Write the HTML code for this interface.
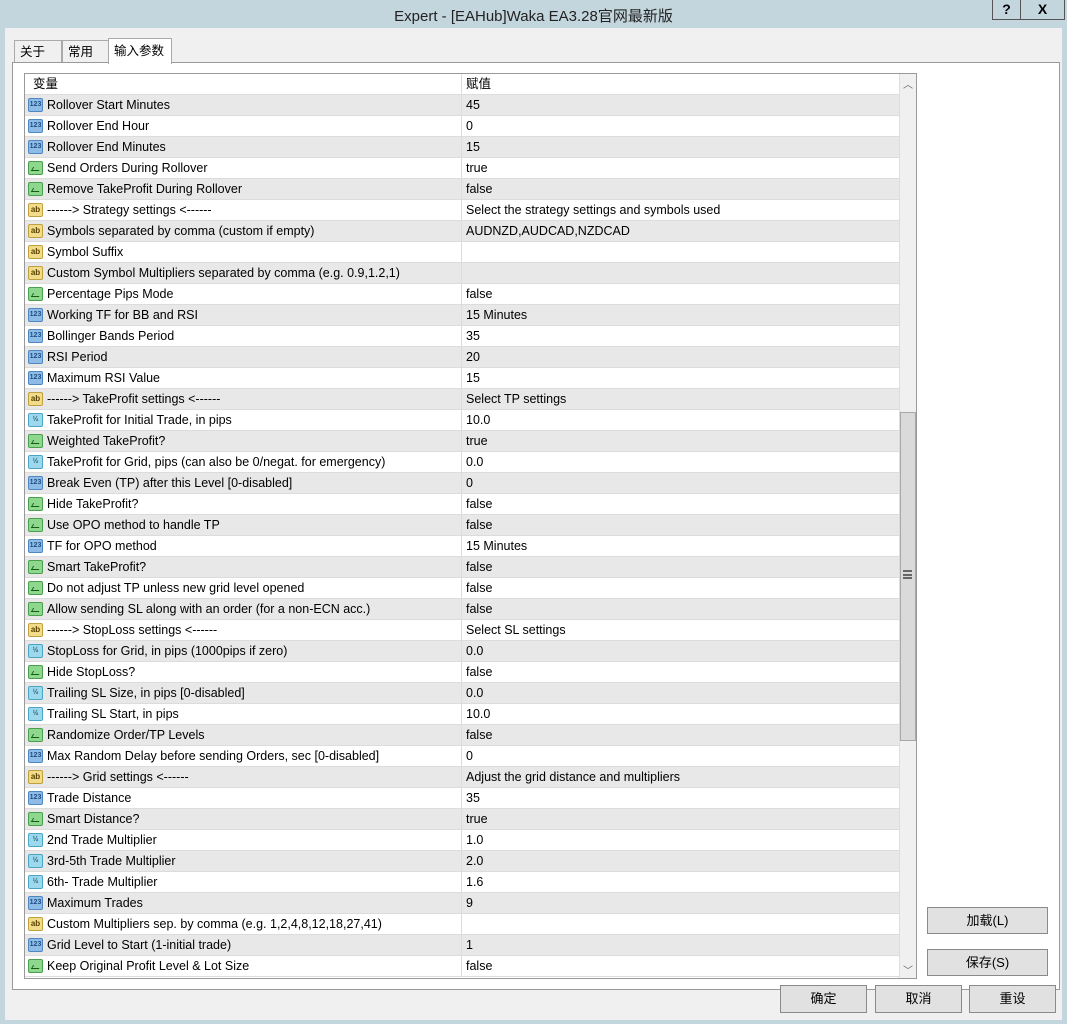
<!DOCTYPE html><html><head><meta charset="utf-8"><style>
*{box-sizing:border-box;margin:0;padding:0}
body{width:1067px;height:1024px;background:#c4d6dd;font-family:"Liberation Sans","Noto Sans CJK SC",sans-serif;font-size:12.5px;color:#000;position:relative;overflow:hidden}
.abs{position:absolute}
.title{left:0;width:1067px;text-align:center;top:5px;font-size:15px;color:#222}
.tb{top:0;height:20px;border:1px solid #555;border-top:none;background:#c4d6dd;font-weight:bold;text-align:center;line-height:18px;font-size:14px}
.body{left:5px;top:28px;width:1057px;height:992px;background:#f0f0f0}
.tab{height:24px;border:1px solid #aaa;border-bottom:none;background:#f0f0f0;padding:1px 5px;font-size:12.5px;line-height:20px}
.panel{left:12px;top:62px;width:1048px;height:928px;border:1px solid #999;background:#fff}
.list{left:24px;top:73px;width:893px;height:906px;border:1px solid #999;background:#fff;overflow:hidden}
.row{position:absolute;left:0;width:874px;height:21px;border-bottom:1px solid #dcdcdc;line-height:20px}
.row.g{background:#e8e8e8}
.row .n{position:absolute;left:22px;white-space:nowrap}
.row .v{position:absolute;left:436px;padding-left:4px;border-left:1px solid #dcdcdc;height:21px;white-space:nowrap}
.ic{position:absolute;left:3px;top:3px;width:15px;height:14px;border-radius:2px;font-size:7px;line-height:12px;text-align:center;font-weight:bold}
.i1{background:#8fbce6;border:1px solid #4f87c0;color:#1d4f86}
.ia{background:#f1dc8a;border:1px solid #c2a040;color:#5a4000;font-size:8px}
.ig{background:#8ed78e;border:1px solid #4aa04a}
.ig:after{content:"";position:absolute;left:3px;top:5px;width:7px;height:3px;border-bottom:1px solid #135c13;border-left:1px solid #135c13;transform:skewX(-30deg)}
.iv{background:#9ed8ec;border:1px solid #4aa6c6;color:#1a5f7a}
.btn{background:#e1e1e1;border:1px solid #8a8a8a;text-align:center;font-size:13px}
</style></head><body>
<div class="abs title">Expert - [EAHub]Waka EA3.28官网最新版</div>
<div class="abs tb" style="left:992px;width:29px">?</div>
<div class="abs tb" style="left:1020px;width:45px">X</div>
<div class="abs body"></div>
<div class="abs tab" style="left:14px;top:40px;width:48px">关于</div>
<div class="abs tab" style="left:62px;top:40px;width:47px">常用</div>
<div class="abs panel"></div>
<div class="abs tab" style="left:108px;top:38px;width:64px;height:26px;background:#fff;z-index:2;padding-top:2px">输入参数</div>
<div class="abs list">
<div class="row" style="top:0;height:21px;border-bottom:1px solid #ddd"><span class="n" style="left:8px">变量</span><span class="v" style="border-color:#ddd">赋值</span></div>
<div class="row g" style="top:21px"><span class="ic i1">123</span><span class="n">Rollover Start Minutes</span><span class="v">45</span></div>
<div class="row" style="top:42px"><span class="ic i1">123</span><span class="n">Rollover End Hour</span><span class="v">0</span></div>
<div class="row g" style="top:63px"><span class="ic i1">123</span><span class="n">Rollover End Minutes</span><span class="v">15</span></div>
<div class="row" style="top:84px"><span class="ic ig"></span><span class="n">Send Orders During Rollover</span><span class="v">true</span></div>
<div class="row g" style="top:105px"><span class="ic ig"></span><span class="n">Remove TakeProfit During Rollover</span><span class="v">false</span></div>
<div class="row" style="top:126px"><span class="ic ia">ab</span><span class="n">------&gt; Strategy settings &lt;------</span><span class="v">Select the strategy settings and symbols used</span></div>
<div class="row g" style="top:147px"><span class="ic ia">ab</span><span class="n">Symbols separated by comma (custom if empty)</span><span class="v">AUDNZD,AUDCAD,NZDCAD</span></div>
<div class="row" style="top:168px"><span class="ic ia">ab</span><span class="n">Symbol Suffix</span><span class="v"></span></div>
<div class="row g" style="top:189px"><span class="ic ia">ab</span><span class="n">Custom Symbol Multipliers separated by comma (e.g. 0.9,1.2,1)</span><span class="v"></span></div>
<div class="row" style="top:210px"><span class="ic ig"></span><span class="n">Percentage Pips Mode</span><span class="v">false</span></div>
<div class="row g" style="top:231px"><span class="ic i1">123</span><span class="n">Working TF for BB and RSI</span><span class="v">15 Minutes</span></div>
<div class="row" style="top:252px"><span class="ic i1">123</span><span class="n">Bollinger Bands Period</span><span class="v">35</span></div>
<div class="row g" style="top:273px"><span class="ic i1">123</span><span class="n">RSI Period</span><span class="v">20</span></div>
<div class="row" style="top:294px"><span class="ic i1">123</span><span class="n">Maximum RSI Value</span><span class="v">15</span></div>
<div class="row g" style="top:315px"><span class="ic ia">ab</span><span class="n">------&gt; TakeProfit settings &lt;------</span><span class="v">Select TP settings</span></div>
<div class="row" style="top:336px"><span class="ic iv">½</span><span class="n">TakeProfit for Initial Trade, in pips</span><span class="v">10.0</span></div>
<div class="row g" style="top:357px"><span class="ic ig"></span><span class="n">Weighted TakeProfit?</span><span class="v">true</span></div>
<div class="row" style="top:378px"><span class="ic iv">½</span><span class="n">TakeProfit for Grid, pips (can also be 0/negat. for emergency)</span><span class="v">0.0</span></div>
<div class="row g" style="top:399px"><span class="ic i1">123</span><span class="n">Break Even (TP) after this Level [0-disabled]</span><span class="v">0</span></div>
<div class="row" style="top:420px"><span class="ic ig"></span><span class="n">Hide TakeProfit?</span><span class="v">false</span></div>
<div class="row g" style="top:441px"><span class="ic ig"></span><span class="n">Use OPO method to handle TP</span><span class="v">false</span></div>
<div class="row" style="top:462px"><span class="ic i1">123</span><span class="n">TF for OPO method</span><span class="v">15 Minutes</span></div>
<div class="row g" style="top:483px"><span class="ic ig"></span><span class="n">Smart TakeProfit?</span><span class="v">false</span></div>
<div class="row" style="top:504px"><span class="ic ig"></span><span class="n">Do not adjust TP unless new grid level opened</span><span class="v">false</span></div>
<div class="row g" style="top:525px"><span class="ic ig"></span><span class="n">Allow sending SL along with an order (for a non-ECN acc.)</span><span class="v">false</span></div>
<div class="row" style="top:546px"><span class="ic ia">ab</span><span class="n">------&gt; StopLoss settings &lt;------</span><span class="v">Select SL settings</span></div>
<div class="row g" style="top:567px"><span class="ic iv">½</span><span class="n">StopLoss for Grid, in pips (1000pips if zero)</span><span class="v">0.0</span></div>
<div class="row" style="top:588px"><span class="ic ig"></span><span class="n">Hide StopLoss?</span><span class="v">false</span></div>
<div class="row g" style="top:609px"><span class="ic iv">½</span><span class="n">Trailing SL Size, in pips [0-disabled]</span><span class="v">0.0</span></div>
<div class="row" style="top:630px"><span class="ic iv">½</span><span class="n">Trailing SL Start, in pips</span><span class="v">10.0</span></div>
<div class="row g" style="top:651px"><span class="ic ig"></span><span class="n">Randomize Order/TP Levels</span><span class="v">false</span></div>
<div class="row" style="top:672px"><span class="ic i1">123</span><span class="n">Max Random Delay before sending Orders, sec [0-disabled]</span><span class="v">0</span></div>
<div class="row g" style="top:693px"><span class="ic ia">ab</span><span class="n">------&gt; Grid settings &lt;------</span><span class="v">Adjust the grid distance and multipliers</span></div>
<div class="row" style="top:714px"><span class="ic i1">123</span><span class="n">Trade Distance</span><span class="v">35</span></div>
<div class="row g" style="top:735px"><span class="ic ig"></span><span class="n">Smart Distance?</span><span class="v">true</span></div>
<div class="row" style="top:756px"><span class="ic iv">½</span><span class="n">2nd Trade Multiplier</span><span class="v">1.0</span></div>
<div class="row g" style="top:777px"><span class="ic iv">½</span><span class="n">3rd-5th Trade Multiplier</span><span class="v">2.0</span></div>
<div class="row" style="top:798px"><span class="ic iv">½</span><span class="n">6th- Trade Multiplier</span><span class="v">1.6</span></div>
<div class="row g" style="top:819px"><span class="ic i1">123</span><span class="n">Maximum Trades</span><span class="v">9</span></div>
<div class="row" style="top:840px"><span class="ic ia">ab</span><span class="n">Custom Multipliers sep. by comma (e.g. 1,2,4,8,12,18,27,41)</span><span class="v"></span></div>
<div class="row g" style="top:861px"><span class="ic i1">123</span><span class="n">Grid Level to Start (1-initial trade)</span><span class="v">1</span></div>
<div class="row" style="top:882px"><span class="ic ig"></span><span class="n">Keep Original Profit Level &amp; Lot Size</span><span class="v">false</span></div>
<div class="abs" style="left:874px;top:0;width:18px;height:904px;background:#f0f0f0;border-left:1px solid #ddd"></div>
<div class="abs" style="left:878px;top:2px;font-size:10px;color:#666">︿</div>
<div class="abs" style="left:878px;top:888px;font-size:10px;color:#666">﹀</div>
<div class="abs" style="left:875px;top:338px;width:16px;height:329px;background:#dadada;border:1px solid #a8a8a8"></div>
<div class="abs" style="left:878px;top:496px;width:9px;height:9px;border-top:2px solid #666;border-bottom:2px solid #666"><div style="margin-top:1.5px;height:2px;background:#666"></div></div>
</div>
<div class="abs btn" style="left:927px;top:907px;width:121px;height:27px;line-height:25px">加载(L)</div>
<div class="abs btn" style="left:927px;top:949px;width:121px;height:27px;line-height:25px">保存(S)</div>
<div class="abs btn" style="left:780px;top:985px;width:87px;height:28px;line-height:26px">确定</div>
<div class="abs btn" style="left:875px;top:985px;width:87px;height:28px;line-height:26px">取消</div>
<div class="abs btn" style="left:969px;top:985px;width:87px;height:28px;line-height:26px">重设</div>
</body></html>
